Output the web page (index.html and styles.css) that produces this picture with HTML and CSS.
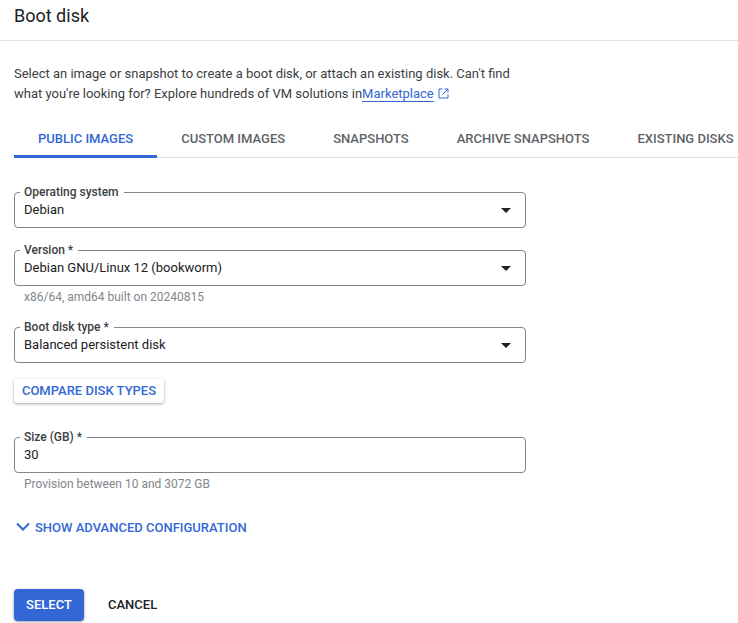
FILE: index.html
```html
<!DOCTYPE html>
<html>
<head>
<meta charset="utf-8" />
<title>Boot disk</title>
<link rel="stylesheet" href="styles.css">
</head>
<body>
<div class="panel">
  <div class="header">Boot disk</div>
  <div class="content">
    <p class="intro">Select an image or snapshot to create a boot disk, or attach an existing disk. Can't find what you're looking for? Explore hundreds of VM solutions in<a class="link" href="#">Marketplace</a>
      <svg class="ext_icon" width="11" height="11" viewBox="0 0 11 11" fill="none" stroke="#3367d6" stroke-width="1"><path d="M4.500 1H1v9h9V6.500"/><path d="M6.500 1H10v3.500"/><path d="M10 1L4.500 6.500"/></svg>
    </p>
    <div class="tabs">
      <div class="tab active">PUBLIC IMAGES</div>
      <div class="tab">CUSTOM IMAGES</div>
      <div class="tab">SNAPSHOTS</div>
      <div class="tab">ARCHIVE SNAPSHOTS</div>
      <div class="tab">EXISTING DISKS</div>
    </div>

    <fieldset class="field first">
      <legend>Operating system</legend>
      <span class="value">Debian</span>
      <span class="arrow"></span>
    </fieldset>

    <fieldset class="field with_hint">
      <legend>Version *</legend>
      <span class="value">Debian GNU/Linux 12 (bookworm)</span>
      <span class="arrow"></span>
    </fieldset>
    <div class="hint">x86/64, amd64 built on 20240815</div>

    <fieldset class="field after_hint">
      <legend>Boot disk type *</legend>
      <span class="value">Balanced persistent disk</span>
      <span class="arrow"></span>
    </fieldset>

    <button class="btn_compare">COMPARE DISK TYPES</button>

    <fieldset class="field size">
      <legend>Size (GB) *</legend>
      <span class="value">30</span>
    </fieldset>
    <div class="hint">Provision between 10 and 3072 GB</div>

    <div class="advanced">
      <svg width="16" height="10" viewBox="0 0 16 10" fill="none" stroke="#3367d6" stroke-width="2"><path d="M2 1.500L8 7.500L14 1.500"/></svg>
      <span>SHOW ADVANCED CONFIGURATION</span>
    </div>

    <div class="actions">
      <button class="btn_select">SELECT</button>
      <button class="btn_cancel">CANCEL</button>
    </div>
  </div>
</div>
</body>
</html>
```

FILE: styles.css
```css
*{margin:0;padding:0;box-sizing:border-box;}
html,body{height:100%;overflow:hidden;}
body{background:#fff;font-family:Roboto,"Liberation Sans",sans-serif;color:#202124;}
button{font-family:inherit;border:none;cursor:pointer;}

.header{height:41px;padding:5px 14px 0;font-size:18px;line-height:22px;border-bottom:1px solid #e0e0e0;}
.content{padding:23px 0 0 14px;}
.intro{width:510px;font-size:13px;line-height:20px;color:#3c4043;}
.link{color:#3367d6;text-decoration:underline;text-underline-offset:3px;}
.ext_icon{margin-left:1px;vertical-align:-1px;}

.tabs{display:flex;margin-top:14px;height:40px;border-bottom:1px solid #e0e0e0;white-space:nowrap;}
.tab{padding:2px 24px 0;font-size:13px;font-weight:500;line-height:38px;color:#5f6368;}
.tab.active{color:#3367d6;border-bottom:3px solid #3367d6;height:40px;}

.field{position:relative;width:512px;height:42px;border:1px solid #80868b;border-radius:4px;padding:0 9px;display:flex;align-items:center;}
.field legend{margin-left:-4px;padding:0 5px 0 4px;font-size:12px;font-weight:500;line-height:12px;color:#3c4043;}
.field.first{margin-top:28px;}
.field.with_hint{margin-top:16px;}
.field.after_hint{margin-top:16px;}
.field.size{margin-top:28px;}
.value{font-size:13px;line-height:20px;color:#202124;position:relative;top:-3px;}
.arrow{position:absolute;right:14px;top:10px;width:0;height:0;border-left:5px solid transparent;border-right:5px solid transparent;border-top:5px solid #202124;}
.hint{font-size:12px;line-height:12px;height:14px;margin-top:5px;margin-left:10px;color:#80868b;}

.btn_compare{display:block;margin-top:16px;width:150px;height:24px;padding-bottom:1px;background:#fff;border-radius:3px;font-size:13px;font-weight:500;color:#3367d6;box-shadow:0 1px 3px rgba(60,64,67,.45);}

.advanced{display:flex;align-items:center;gap:4px;margin-top:26px;margin-left:1px;height:18px;font-size:13px;font-weight:500;color:#3367d6;}

.actions{display:flex;align-items:center;margin-top:53px;}
.btn_select{width:70px;height:32px;padding-bottom:1px;background:#3367d6;color:#fff;border-radius:4px;font-size:13px;font-weight:500;box-shadow:0 1px 3px rgba(60,64,67,.5);}
.btn_cancel{background:none;margin-left:24px;padding-bottom:1px;font-size:13px;font-weight:500;color:#202124;}
```
